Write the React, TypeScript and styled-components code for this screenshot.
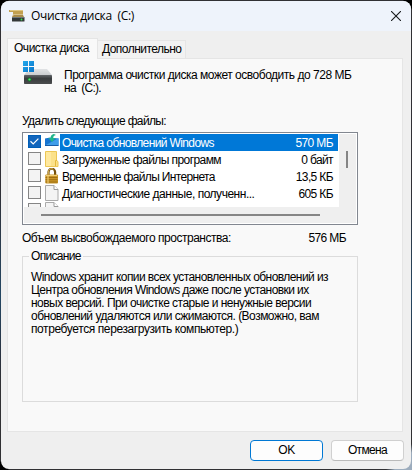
import React from "react";
import styled, { createGlobalStyle } from "styled-components";

const Global = createGlobalStyle`
  * { box-sizing: border-box; }
  html, body { margin: 0; padding: 0; background: #303033; overflow: hidden; }
`;

const Desktop = styled.div`
  width: 412px;
  height: 470px;
  padding: 1px;
  background:
    radial-gradient(circle at 0 0, #000 8px, transparent 9px),
    radial-gradient(circle at 412px 0, #000 8px, transparent 9px),
    radial-gradient(circle at 0 470px, #000 8px, transparent 9px),
    linear-gradient(135deg, transparent 0 97%, #9cacbd 98%),
    linear-gradient(#303033, #302f35 40%, #244763 63%, #29313f 76%, #303033 82%);
`;

const Window = styled.main`
  width: 410px;
  height: 468px;
  border-radius: 8px;
  overflow: hidden;
  background: #efefef;
  color: #000;
  font: 12px/13px "Liberation Sans", Arial, sans-serif;
  display: flex;
  flex-direction: column;
`;

const TitleBar = styled.header`
  height: 30px;
  flex: none;
  display: flex;
  align-items: center;
  padding: 0 10px 0 8px;
  background: #eef3fb;
  font: 12px/16px "Open Sans", "Noto Sans", sans-serif;
`;

const Label = styled.span<{ $track?: number }>`
  display: block;
  white-space: pre;
  letter-spacing: ${(p) => p.$track ?? 0}px;
`;

const Title = styled(Label)`
  margin: 0 auto 0 6px;
`;

const Tabs = styled.nav`
  display: flex;
  align-items: flex-end;
  height: 20px;
  margin: 7px 0 0 6px;
  flex: none;
  position: relative;
  z-index: 1;
`;

const Tab = styled.div<{ $active?: boolean }>`
  width: ${(p) => (p.$active ? 91 : 88)}px;
  height: ${(p) => (p.$active ? 21 : 18)}px;
  margin-bottom: ${(p) => (p.$active ? -1 : 0)}px;
  padding: ${(p) => (p.$active ? "3px 0 0 6px" : "2px 0 0 4px")};
  background: ${(p) => (p.$active ? "#f9f9f9" : "#f2f2f2")};
  border: 1px solid #e5e5e5;
  border-bottom: 0;
  border-left-width: ${(p) => (p.$active ? 1 : 0)}px;
`;

const Panel = styled.section`
  width: 396px;
  height: 374px;
  flex: none;
  margin-left: 6px;
  padding: 1px 0 0 14px;
  background: #f9f9f9;
  border: 1px solid #e5e5e5;
`;

const Intro = styled.div`
  display: flex;
  height: 55px;
  gap: 11px;
`;

const IntroText = styled.div`
  padding-top: 9px;
`;

const ListBox = styled.div`
  width: 336px;
  height: 93px;
  margin-top: 4px;
  padding: 1px;
  border: 1px solid #828790;
  background: #fff;
  display: grid;
  grid-template: 73px 16px / 315px 17px;
`;

const Rows = styled.div`
  overflow: hidden;
  background: #fff;
  border-bottom-right-radius: 3px;
`;

const Row = styled.div`
  display: flex;
  height: 17px;
  padding-left: 4px;
`;

const Check = styled.div<{ $on?: boolean }>`
  width: 13px;
  height: 13px;
  margin: 1px 4px 0 0;
  flex: none;
  border: 1px solid ${(p) => (p.$on ? "#005fb8" : "#858585")};
  background: ${(p) => (p.$on ? "#1266bd" : "#f3f3f3")};
  svg { display: block; }
`;

const IconCell = styled.div`
  width: 15px;
  height: 17px;
  flex: none;
`;

const Item = styled.div<{ $on?: boolean }>`
  flex: 1;
  display: flex;
  justify-content: space-between;
  padding: 3px 5px 0 2px;
  margin-right: 1px;
  background: ${(p) => (p.$on ? "#0078d7" : "#fff")};
  color: ${(p) => (p.$on ? "#fff" : "#000")};
`;

const VTrack = styled.div`
  grid-row: 1 / 3;
  grid-column: 2;
  background: #efefef;
  padding: 17px 0 0 7px;
`;

const VThumb = styled.div`
  width: 2px;
  height: 17px;
  background: #858585;
`;

const HTrack = styled.div`
  background: #efefef;
  padding: 7px 0 0 17px;
`;

const HThumb = styled.div`
  width: 279px;
  height: 2px;
  background: #858585;
`;

const Total = styled.div`
  display: flex;
  justify-content: space-between;
  width: 324px;
  margin-top: 7px;
`;

const Group = styled.fieldset`
  width: 336px;
  height: 152px;
  margin: 5px 0 0;
  padding: 8px 0 0 8px;
  border: 1px solid #dcdcdc;
  min-width: 0;
`;

const Legend = styled.legend`
  margin-left: -2px;
  padding: 0 2px;
`;

const Footer = styled.footer`
  display: flex;
  justify-content: flex-end;
  gap: 8px;
  padding: 8px 7px 0 0;
`;

const Button = styled.button<{ $primary?: boolean }>`
  width: 73px;
  height: 21px;
  padding: 0;
  display: flex;
  align-items: center;
  justify-content: center;
  background: #fdfdfd;
  border: 1px solid ${(p) => (p.$primary ? "#0078d4" : "#d0d0d0")};
  border-bottom-color: ${(p) => (p.$primary ? "#0078d4" : "#bababa")};
  border-radius: 4px;
  font: inherit;
  color: #000;
`;

const CleanerIcon = () => (
  <svg width="16" height="14" viewBox="0 0 16 14">
    <path d="M0 1h14v4H4V3H0z" fill="#c2a050" />
    <path d="M1 1h13v1H1z" fill="#dfc580" />
    <path d="M4 5h10v3H3z" fill="#d8c18b" />
    <path d="M5 6h9l1 2H3z" fill="#a88b4b" />
    <rect x="3" y="8" width="12.5" height="4.5" rx=".6" fill="#333839" />
    <path d="M3 8h12v1H3z" fill="#70777b" />
    <circle cx="12.5" cy="10.5" r=".9" fill="#38e84d" />
  </svg>
);

const CloseIcon = () => (
  <svg width="10" height="10" viewBox="0 0 10 10">
    <path d="M0 0l10 10M10 0L0 10" stroke="#17191c" strokeWidth="1.1" />
  </svg>
);

const DriveIcon = () => (
  <svg width="31" height="25" viewBox="0 0 31 25">
    <defs>
      <linearGradient id="top" x2="0" y2="1"><stop stopColor="#e1e3e5" /><stop offset="1" stopColor="#cacdd0" /></linearGradient>
      <linearGradient id="front" x2="0" y2="1"><stop stopColor="#626669" /><stop offset=".4" stopColor="#393c3e" /><stop offset="1" stopColor="#4b4d4e" /></linearGradient>
      <linearGradient id="win" x2="1" y2="1"><stop stopColor="#25a9eb" /><stop offset="1" stopColor="#0876cb" /></linearGradient>
    </defs>
    <path d="M7 9h18l5 6H2z" fill="url(#top)" />
    <rect x="2" y="15" width="28" height="9" rx=".7" fill="url(#front)" />
    <circle cx="7.5" cy="19.5" r="2" fill="#16752a" />
    <circle cx="7.5" cy="19.5" r="1.1" fill="#50ed72" />
    <path d="M1 1h11v11H1z" fill="#f9f9f9" />
    <path d="M1 1h5v5H1zM7 1h5v5H7zM1 7h5v5H1zM7 7h5v5H7z" fill="url(#win)" />
  </svg>
);

const CheckIcon = () => (
  <svg width="11" height="11" viewBox="0 0 11 11">
    <path d="M1.5 5.3l2.7 2.6 5.2-5.2" fill="none" stroke="#fff" strokeWidth="1.2" />
  </svg>
);

const UpdateIcon = () => (
  <svg width="14" height="16" viewBox="0 0 14 16">
    <path d="M0 4.5l5-1 8.5 1v7H0z" fill="#1875d1" />
    <path d="M0 11.5L13.5 4v7.5z" fill="#3f9de9" />
    <path d="M0 11h13.5v1H0z" fill="#185da8" />
    <path d="M9 0c-3 .5-3.3 2.5-3.3 4H3.2L7 8l3.7-4H8.2c0-1.5.5-2.5 2.8-3z" fill="#20b58b" />
  </svg>
);

const FolderIcon = () => (
  <svg width="14" height="16" viewBox="0 0 14 16">
    <path d="M.5.5h11v9l1.5 1v5H.5z" fill="#fbe18a" stroke="#edc755" />
    <path d="M1 1h5v14H1z" fill="#ffe99f" />
    <path d="M10.5 15V9.5H12" fill="none" stroke="#e4b93f" />
  </svg>
);

const LockIcon = () => (
  <svg width="14" height="16" viewBox="0 0 14 16">
    <path d="M3.5 8V4a3.3 3.3 0 016.6 0v4" fill="none" stroke="#77520e" strokeWidth="2.2" />
    <path d="M3.3 7V4a3.3 3.3 0 015-2.8" fill="none" stroke="#d9b65b" />
    <rect x=".3" y="6.5" width="12.7" height="9" rx="1" fill="#c99529" />
    <path d="M1 7h11v1H1z" fill="#f1cf76" />
    <path d="M.5 9.5h12M.5 11.7h12M.5 14h12" stroke="#93640b" strokeWidth=".8" />
    <path d="M2 8h2v7H2z" fill="#efcc70" opacity=".6" />
  </svg>
);

const PageIcon = () => (
  <svg width="14" height="16" viewBox="0 0 14 16">
    <path d="M.5.5H9l4 4v11H.5z" fill="#f4f4f4" stroke="#aaa" />
    <path d="M9 .5v4h4" fill="#fff" stroke="#999" />
  </svg>
);

const rows = [
  { name: "Очистка обновлений Windows", track: -0.62, size: "570 МБ", icon: <UpdateIcon />, on: true },
  { name: "Загруженные файлы программ", track: -0.57, size: "0 байт", icon: <FolderIcon /> },
  { name: "Временные файлы Интернета", track: -0.66, size: "13,5 КБ", icon: <LockIcon /> },
  { name: "Диагностические данные, полученн...", track: -0.48, size: "605 КБ", icon: <PageIcon /> },
  { name: "", track: 0, size: "", icon: <PageIcon /> },
];

const description = [
  { text: "Windows хранит копии всех установленных обновлений из", track: -0.57 },
  { text: "Центра обновления Windows даже после установки их", track: -0.57 },
  { text: "новых версий. При очистке старые и ненужные версии", track: -0.53 },
  { text: "обновлений удаляются или сжимаются. (Возможно, вам", track: -0.51 },
  { text: "потребуется перезагрузить компьютер.)", track: -0.4 },
];

export default function App() {
  return (
    <>
      <Global />
      <Desktop>
        <Window>
          <TitleBar>
            <CleanerIcon />
            <Title $track={-0.3}>Очистка диска  (C:)</Title>
            <CloseIcon />
          </TitleBar>
          <Tabs>
            <Tab $active><Label $track={-0.48}>Очистка диска</Label></Tab>
            <Tab><Label $track={-0.54}>Дополнительно</Label></Tab>
          </Tabs>
          <Panel>
            <Intro>
              <DriveIcon />
              <IntroText>
                <Label $track={-0.48}>Программа очистки диска может освободить до 728 МБ</Label>
                <Label $track={-0.7}>на  (C:).</Label>
              </IntroText>
            </Intro>
            <Label $track={-0.64}>Удалить следующие файлы:</Label>
            <ListBox>
              <Rows>
                {rows.map((r, i) => (
                  <Row key={i}>
                    <Check $on={r.on}>{r.on && <CheckIcon />}</Check>
                    <IconCell>{r.icon}</IconCell>
                    <Item $on={r.on}>
                      <Label $track={r.track}>{r.name}</Label>
                      <Label $track={-0.62}>{r.size}</Label>
                    </Item>
                  </Row>
                ))}
              </Rows>
              <VTrack><VThumb /></VTrack>
              <HTrack><HThumb /></HTrack>
            </ListBox>
            <Total>
              <Label $track={-0.47}>Объем высвобождаемого пространства:</Label>
              <Label $track={-0.62}>576 МБ</Label>
            </Total>
            <Group>
              <Legend><Label $track={-0.68}>Описание</Label></Legend>
              {description.map((d) => <Label key={d.text} $track={d.track}>{d.text}</Label>)}
            </Group>
          </Panel>
          <Footer>
            <Button $primary><Label $track={-0.4}>OK</Label></Button>
            <Button><Label $track={-0.64}>Отмена</Label></Button>
          </Footer>
        </Window>
      </Desktop>
    </>
  );
}
